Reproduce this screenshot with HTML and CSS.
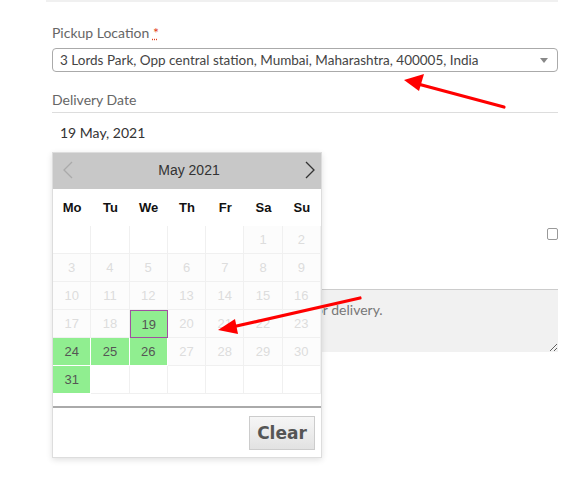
FILE: index.html
```html
<!DOCTYPE html>
<html lang="en">
<head>
  <meta charset="UTF-8">
  <meta name="viewport" content="width=device-width, initial-scale=1.0">
  <title>Delivery Details</title>
  <link rel="stylesheet" href="styles.css">
</head>
<body>
  <div class="top-strip"></div>
  <form class="checkout">
    <div class="field">
      <label class="field-label">Pickup Location <abbr title="required">*</abbr></label>
      <div class="select-box">
        <span>3 Lords Park, Opp central station, Mumbai, Maharashtra, 400005, India</span>
        <span class="select-arrow"></span>
      </div>
    </div>

    <div class="field date-field">
      <label class="field-label">Delivery Date</label>
      <div class="date-input">19 May, 2021</div>

      <div class="datepicker">
        <div class="dp-header">
          <svg class="dp-nav" width="12" height="18" viewBox="0 0 12 18"><polyline points="10,1 2,9 10,17" fill="none" stroke="#aaa" stroke-width="1.3"/></svg>
          <span class="dp-title">May 2021</span>
          <svg class="dp-nav" width="12" height="18" viewBox="0 0 12 18"><polyline points="2,1 10,9 2,17" fill="none" stroke="#333" stroke-width="1.3"/></svg>
        </div>
        <div class="dp-weekdays">
          <span>Mo</span><span>Tu</span><span>We</span><span>Th</span><span>Fr</span><span>Sa</span><span>Su</span>
        </div>
        <div class="dp-days" id="days"></div>
        <div class="dp-footer">
          <button type="button" class="dp-clear">Clear</button>
        </div>
      </div>
    </div>

    <div class="field check-row">
      <input type="checkbox" class="check">
    </div>

    <div class="field">
      <textarea class="note" placeholder="Notes about your order, e.g. special notes for delivery."></textarea>
    </div>
  </form>

  <svg class="annotations" width="586" height="482" viewBox="0 0 586 482">
    <line x1="504" y1="107" x2="418" y2="84" stroke="#f00" stroke-width="3.2" stroke-linecap="round"/>
    <polygon points="404,80 424,74 419,91" fill="#f00"/>
    <line x1="360" y1="298" x2="232" y2="327" stroke="#f00" stroke-width="3.2" stroke-linecap="round"/>
    <polygon points="218,330 235,319 238,334" fill="#f00"/>
  </svg>

  <script>
    // May 2021 starts on a Saturday
    var days = document.getElementById('days');
    var available = [19, 24, 25, 26, 31];
    for (var i = 0; i < 42; i++) {
      var d = i - 4;
      var cell = document.createElement('span');
      cell.className = 'dp-day';
      if (d >= 1 && d <= 31) {
        cell.textContent = d;
        if (available.indexOf(d) >= 0) {
          cell.className += ' available';
        } else {
          cell.className += ' disabled';
        }
        if (d === 19) cell.className += ' selected';
      }
      days.appendChild(cell);
    }
  </script>
</body>
</html>
```

FILE: styles.css
```css
body {
  margin: 0;
  background-color: #fff;
  font-family: Lato, "Open Sans", sans-serif;
  color: #444;
  position: relative;
  width: 586px;
  height: 482px;
  overflow: hidden;
}

.top-strip {
  height: 2px;
  margin-left: 46px;
  width: 512px;
  background-color: #f0f0f0;
}

.checkout {
  padding: 0 28px 0 52px;
}

.field-label {
  display: block;
  font-size: 14px;
  line-height: 20px;
  color: #666;
}

.field-label abbr {
  color: #e2401c;
  text-decoration: underline dotted;
  border: none;
}

.field:first-child .field-label {
  margin-top: 21px;
  margin-bottom: 5px;
}

.select-box {
  display: flex;
  align-items: center;
  justify-content: space-between;
  height: 24px;
  box-sizing: border-box;
  border: 1px solid #aaa;
  border-radius: 4px;
  padding: 0 9px 0 7px;
  font-size: 13.5px;
  color: #444;
}

.select-arrow {
  width: 0;
  height: 0;
  border-left: 4px solid transparent;
  border-right: 4px solid transparent;
  border-top: 5px solid #888;
}

.date-field {
  position: relative;
  margin-top: 18px;
}

.date-field .field-label {
  margin-bottom: 2px;
}

.date-input {
  height: 40px;
  box-sizing: border-box;
  border-top: 1px solid #ddd;
  padding: 0 8px;
  display: flex;
  align-items: center;
  font-size: 14px;
  color: #333;
}

.datepicker {
  position: absolute;
  top: 62px;
  left: 0;
  width: 270px;
  box-sizing: border-box;
  border: 1px solid #ddd;
  background-color: #fff;
  box-shadow: 0 2px 6px rgba(0, 0, 0, 0.12);
  font-family: "Liberation Sans", Arial, sans-serif;
  z-index: 2;
}

.dp-header {
  height: 36px;
  background-color: #c8c8c8;
  display: flex;
  align-items: center;
  justify-content: space-between;
  padding: 0 5px 2px 9px;
  box-sizing: border-box;
}

.dp-title {
  font-size: 14px;
  color: #333;
}

.dp-weekdays {
  display: grid;
  grid-template-columns: repeat(7, 1fr);
  height: 37px;
  align-items: center;
  text-align: center;
  font-size: 13px;
  font-weight: bold;
  color: #111;
}

.dp-days {
  display: grid;
  grid-template-columns: repeat(7, 1fr);
  grid-auto-rows: 28px;
}

.dp-day {
  display: flex;
  align-items: center;
  justify-content: center;
  font-size: 13px;
  box-sizing: border-box;
  border-right: 1px solid #f0f0f0;
  border-bottom: 1px solid #f0f0f0;
  background-color: #fff;
}

.dp-day.disabled {
  color: #ddd;
  background-color: #fcfcfc;
}

.dp-day.available {
  background-color: #90ee90;
  color: #555;
  border-color: #fff;
}

.dp-day.selected {
  border: 1px solid #a050a0;
}

.dp-footer {
  margin-top: 12px;
  border-top: 2px solid #aaa;
  height: 51px;
  box-sizing: border-box;
  display: flex;
  justify-content: flex-end;
  align-items: center;
  padding-right: 6px;
}

.dp-clear {
  width: 66px;
  height: 34px;
  border: 1px solid #ccc;
  background: linear-gradient(#f6f6f6, #e2e2e2);
  font-family: "DejaVu Sans", Verdana, sans-serif;
  font-weight: bold;
  font-size: 17px;
  color: #555;
  padding: 0;
}

.check-row {
  margin-top: 77px;
  display: flex;
  justify-content: flex-end;
  height: 11px;
}

.check {
  width: 11px;
  height: 12px;
  margin: -1px 0 0;
  appearance: none;
  -webkit-appearance: none;
  border: 1px solid #999;
  border-radius: 2px;
  background-color: #fff;
}

.note {
  display: block;
  margin-top: 49px;
  width: 100%;
  height: 63px;
  box-sizing: border-box;
  border: none;
  border-top: 1px solid #ccc;
  background-color: #f1f1f1;
  padding: 11px 8px 11px 1px;
  font-family: Lato, "Open Sans", sans-serif;
  font-size: 14px;
  color: #777;
}

.note::placeholder {
  color: #777;
}

.annotations {
  position: absolute;
  top: 0;
  left: 0;
  pointer-events: none;
  z-index: 5;
}
```
